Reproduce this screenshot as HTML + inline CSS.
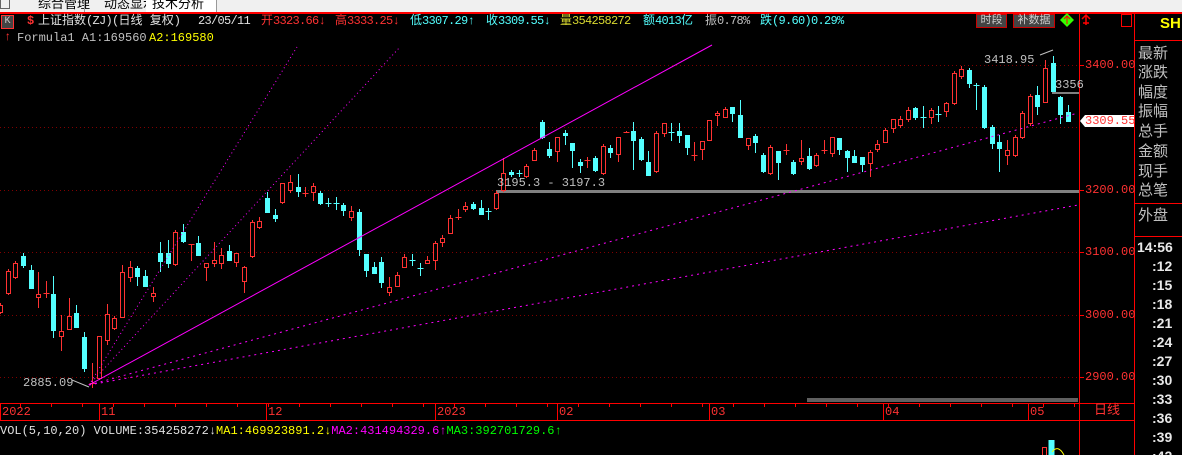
<!DOCTYPE html>
<html><head><meta charset="utf-8">
<style>
*{margin:0;padding:0}
html,body{width:1182px;height:455px;overflow:hidden}
body{background:#000;position:relative;font-family:"Liberation Mono","Noto Sans CJK SC",monospace;}
.t{position:absolute;white-space:nowrap;font-size:12px;line-height:14px}
.cj{font-family:"Liberation Mono","Noto Sans CJK SC",monospace}
.n{letter-spacing:-0.7px}
.r{color:#ff3232}.c{color:#54ffff}.y{color:#ffff00}.g{color:#c0c0c0}.w{color:#e0e0e0}.m{color:#ff00ff}.gr{color:#00ff00}
.pl{position:absolute;left:1138px;font-size:15px;line-height:17px;color:#c0c0c0;font-family:"Noto Sans CJK SC",sans-serif}
.tm{position:absolute;font-size:14px;line-height:16px;color:#e8e8e8;font-weight:bold;font-family:"Liberation Sans",sans-serif}
.tab{position:absolute;top:-7px;font-size:13px;color:#000;font-family:'Noto Sans CJK SC',sans-serif}
</style></head><body>
<div style="position:absolute;left:0;top:0;width:1182px;height:12px;background:#f0f0f0;overflow:hidden">
 <div style="position:absolute;left:0;top:0;width:8px;height:8px;border:1px solid #666;border-top:none"></div>
 <div class="tab" style="left:38px">综合管理</div>
 <div style="position:absolute;left:84px;top:0;width:1px;height:12px;background:#999"></div>
 <div class="tab" style="left:104px">动态显示牌</div>
 <div style="position:absolute;left:146px;top:0;width:70px;height:12px;background:#fff"></div>
 <div class="tab" style="left:152px">技术分析</div>
 <div style="position:absolute;left:216px;top:0;width:1px;height:12px;background:#999"></div>
</div>
<div style="position:absolute;left:0;top:12px;width:1182px;height:2px;background:#ff0000"></div>

<svg width="1182" height="455" style="position:absolute;left:0;top:0" id="sv">
 <g stroke="#800000" stroke-width="1" stroke-dasharray="1,3">
  <line x1="0" y1="65.5" x2="1078" y2="65.5"/><line x1="0" y1="127.5" x2="1078" y2="127.5"/>
  <line x1="0" y1="190.5" x2="1078" y2="190.5"/><line x1="0" y1="252.5" x2="1078" y2="252.5"/>
  <line x1="0" y1="315.5" x2="1078" y2="315.5"/><line x1="0" y1="377.5" x2="1078" y2="377.5"/>
 </g>
 <rect x="496" y="190" width="583" height="3" fill="#808080"/>
 <rect x="1052" y="92" width="27" height="2" fill="#808080"/>
 <rect x="807" y="398" width="271" height="4" fill="#606060"/>
 <g id="cd"></g>
 <g stroke="#ff00ff" fill="none">
  <line x1="89" y1="385" x2="712" y2="45" stroke-width="1"/>
  <line x1="89" y1="385" x2="297" y2="47" stroke-dasharray="1,3"/>
  <line x1="89" y1="385" x2="400" y2="47" stroke-dasharray="1,3"/>
  <line x1="89" y1="385" x2="1078" y2="113" stroke-dasharray="2,4"/>
  <line x1="89" y1="385" x2="1078" y2="205" stroke-dasharray="2,4"/>
 </g>
 <polyline points="72,380 89,387" stroke="#c0c0c0" fill="none"/>
 <polyline points="1040,55 1053,50" stroke="#c0c0c0" fill="none"/>
 <line x1="1079.5" y1="14" x2="1079.5" y2="455" stroke="#ff0000"/>
 <line x1="1134.5" y1="14" x2="1134.5" y2="455" stroke="#ff0000"/>
 <line x1="1134" y1="40.5" x2="1182" y2="40.5" stroke="#ff0000"/>
 <line x1="1134" y1="203.5" x2="1182" y2="203.5" stroke="#ff0000"/>
 <line x1="1134" y1="236.5" x2="1182" y2="236.5" stroke="#ff0000"/>
 <line x1="0" y1="403.5" x2="1134" y2="403.5" stroke="#ff0000"/>
 <line x1="0" y1="420.5" x2="1134" y2="420.5" stroke="#ff0000"/>
 <g stroke="#ff0000">
  <line x1="0.5" y1="404" x2="0.5" y2="420"/><line x1="99.5" y1="404" x2="99.5" y2="420"/>
  <line x1="266.5" y1="404" x2="266.5" y2="420"/><line x1="435.5" y1="404" x2="435.5" y2="420"/>
  <line x1="557.5" y1="404" x2="557.5" y2="420"/><line x1="709.5" y1="404" x2="709.5" y2="420"/>
  <line x1="883.5" y1="404" x2="883.5" y2="420"/><line x1="1028.5" y1="404" x2="1028.5" y2="420"/>
 </g>
 <g stroke="#ff0000" id="tk"></g>
 <g stroke="#ff0000">
  <line x1="1079" y1="65.5" x2="1084" y2="65.5"/><line x1="1079" y1="190.5" x2="1084" y2="190.5"/>
  <line x1="1079" y1="252.5" x2="1084" y2="252.5"/><line x1="1079" y1="315.5" x2="1084" y2="315.5"/>
  <line x1="1079" y1="377.5" x2="1084" y2="377.5"/>
 </g>
 <polygon points="1080,121 1085,115 1134,115 1134,127 1085,127" fill="#fff"/>
 <rect x="1048.5" y="440" width="6" height="15" fill="#54ffff"/>
 <rect x="1042.5" y="447.5" width="4" height="8" fill="none" stroke="#ff3232"/>
 <path d="M1052 452 Q1058 444 1064 455" stroke="#ffff00" fill="none"/>
 <polygon points="1067,13 1074,20 1067,27 1060,20" fill="#33ff00"/>
 <path d="M1067 16 L1067 24 M1064 19 L1067 16 L1070 19" stroke="#ff0000" fill="none"/>
 <path d="M1086 15 L1086 25 M1082 19 L1086 15 L1090 19 M1083 23 L1089 23" stroke="#ff0000" stroke-width="1.5" fill="none"/>
 <rect x="1121.5" y="14.5" width="10" height="12" fill="none" stroke="#ff0000"/>
</svg>

<div class="t" style="left:1px;top:15px;width:11px;height:12px;border:1px solid #ff3232;background:#444;color:#ccc;font-size:10px;line-height:12px;text-align:center">K</div>
<div class="t r" style="left:27px;top:14px;font-weight:bold">$</div>
<div class="t cj w" style="left:38px;top:14px">上证指数<span class="n">(ZJ)(</span>日线 复权<span class="n">)</span></div>
<div class="t w n" style="left:198px;top:14px">23/05/11</div>
<div class="t cj r" style="left:261px;top:14px">开<span class="n">3323.66</span>↓</div>
<div class="t cj r" style="left:335px;top:14px">高<span class="n">3333.25</span>↓</div>
<div class="t cj c" style="left:410px;top:14px">低<span class="n">3307.29</span>↑</div>
<div class="t cj c" style="left:486px;top:14px">收<span class="n">3309.55</span>↓</div>
<div class="t cj" style="left:560px;top:14px;color:#d8d830">量<span class="n">354258272</span></div>
<div class="t cj c" style="left:643px;top:14px">额<span class="n">4013</span>亿</div>
<div class="t cj g" style="left:705px;top:14px">振<span class="n">0.78%</span></div>
<div class="t cj c" style="left:760px;top:14px">跌<span class="n">(9.60)0.29%</span></div>
<div class="t cj" style="left:976px;top:14px;width:29px;height:12px;border:1px solid #c00;background:#444;color:#ccc;font-size:11px;line-height:12px;text-align:center">时段</div>
<div class="t cj" style="left:1013px;top:14px;width:40px;height:12px;border:1px solid #c00;background:#444;color:#ccc;font-size:11px;line-height:12px;text-align:center">补数据</div>
<div class="t y" style="left:1160px;top:17px;font-size:15px;font-weight:bold;font-family:'Liberation Sans'">SH</div>

<div class="t r" style="left:4px;top:30px;font-weight:bold">↑</div>
<div class="t g" style="left:17px;top:31px">Formula1 A1:169560</div>
<div class="t y" style="left:149px;top:31px">A2:169580</div>

<div class="t g" style="left:23px;top:376px">2885.09</div>
<div class="t g" style="left:984px;top:53px">3418.95</div>
<div class="t g" style="left:1055px;top:78px">3356</div>
<div class="t g" style="left:497px;top:176px">3195.3 - 3197.3</div>

<div class="t r" style="left:1085px;top:58px">3400.00</div>
<div class="t r" style="left:1085px;top:183px">3200.00</div>
<div class="t r" style="left:1085px;top:245px">3100.00</div>
<div class="t r" style="left:1085px;top:308px">3000.00</div>
<div class="t r" style="left:1085px;top:370px">2900.00</div>
<div class="t r" style="left:1085px;top:114px">3309.55</div>

<div class="t r" style="left:2px;top:405px">2022</div>
<div class="t r" style="left:101px;top:405px">11</div>
<div class="t r" style="left:268px;top:405px">12</div>
<div class="t r" style="left:437px;top:405px">2023</div>
<div class="t r" style="left:559px;top:405px">02</div>
<div class="t r" style="left:711px;top:405px">03</div>
<div class="t r" style="left:885px;top:405px">04</div>
<div class="t r" style="left:1030px;top:405px">05</div>
<div class="t r cj" style="left:1094px;top:404px;font-size:13px">日线</div>

<div class="t" style="left:0;top:424px"><span class="w">VOL(5,10,20) VOLUME:354258272↓</span><span class="y">MA1:469923891.2↓</span><span class="m">MA2:431494329.6↑</span><span class="gr">MA3:392701729.6↑</span></div>

<div class="pl" style="top:44px">最新</div><div class="pl" style="top:63px">涨跌</div>
<div class="pl" style="top:83px">幅度</div><div class="pl" style="top:102px">振幅</div>
<div class="pl" style="top:122px">总手</div><div class="pl" style="top:142px">金额</div>
<div class="pl" style="top:162px">现手</div><div class="pl" style="top:181px">总笔</div>
<div class="pl" style="top:206px">外盘</div>
<div class="tm" style="left:1137px;top:239px">14:56</div>
<div class="tm" style="left:1152px;top:258px">:12</div>
<div class="tm" style="left:1152px;top:277px">:15</div>
<div class="tm" style="left:1152px;top:296px">:18</div>
<div class="tm" style="left:1152px;top:315px">:21</div>
<div class="tm" style="left:1152px;top:334px">:24</div>
<div class="tm" style="left:1152px;top:353px">:27</div>
<div class="tm" style="left:1152px;top:372px">:30</div>
<div class="tm" style="left:1152px;top:391px">:33</div>
<div class="tm" style="left:1152px;top:410px">:36</div>
<div class="tm" style="left:1152px;top:429px">:39</div>
<div class="tm" style="left:1152px;top:448px;height:7px;overflow:hidden">:42</div>

<script>
var D="r,305,312;r,271,293;r,263,277;c,256,265,253,268;c,270,288,265,288;r,294,297,272,308;r,293,293,281,298;c,294,330,276,338;r,331,336,315,351;r,316,329,298,329;c,313,327,305,327;c,337,368,332,372;r,383,383,363,388;r,336,378,336,380;r,314,340,304,345;r,318,328;r,272,317,265,317;r,267,277,261,282;c,268,276,266,286;c,276,286,270,286;r,293,296,287,302;c,253,261,242,272;c,253,263,240,268;r,232,264;c,232,241,224,243;r,244,244,244,261;c,243,255,236,255;r,263,267,263,281;r,260,263,242,267;r,255,263,248,269;c,251,260,245,260;r,253,262,253,267;r,267,281,266,293;r,222,256;r,221,227,217,229;c,198,212,192,212;c,215,218,209,222;r,183,202,183,204;r,182,190,175,193;c,187,191,174,197;r,193,193,187,197;r,186,192,183,201;c,193,203;c,203,203,198,207;c,203,203,197,210;c,205,210,203,216;r,211,217,206,221;c,212,249,209,256;c,254,270,254,277;c,267,273,262,273;c,262,282,257,288;r,287,292,277,296;r,275,286,272,286;r,257,267,254,268;c,260,260,254,266;c,268,268,263,276;r,260,263,256,263;r,243,260,241,270;r,238,242,235,247;r,218,233,215,233;r,217,217,209,220;r,206,209,202,212;c,204,208;c,208,214,200,215;c,211,211,208,220;r,193,208;r,173,190,158,192;c,172,174,170,177;c,173,174,170,177;r,166,176;r,150,160,148,160;c,122,137;c,149,155,142,158;r,137,151,137,162;c,133,135,130,145;c,143,150,143,168;c,162,165,159,173;r,160,160,157,168;c,158,170;r,146,173;c,148,152,145,158;r,137,154,137,162;r,132,133,131,133;c,131,140,122,170;c,139,159;c,162,175,151,175;r,133,171;r,123,133,123,137;c,132,132,123,141;c,131,135,123,143;c,135,147,135,155;r,155,155,142,161;r,141,149,141,160;r,120,140,120,140;r,113,115,111,126;r,109,117,107,118;c,107,113,107,122;c,115,137,100,137;r,138,145,138,150;c,136,142,134,153;c,155,171;r,147,173;c,151,162,151,180;r,150,150,144,155;c,162,173;r,158,161,140,165;c,156,168,148,170;r,155,165;r,150,150,140,154;r,137,153,137,157;c,138,149,138,155;c,151,157,150,172;c,156,162,150,163;c,157,164,157,172;r,152,163,150,177;r,144,149,140,152;r,130,142,128,142;r,119,128,119,133;r,119,125,116,128;r,110,119,107,122;c,108,117,107,120;c,117,117,106,128;r,110,117,108,124;c,114,114,106,122;r,103,111,102,117;r,73,103;r,69,76,66,79;c,70,83,68,88;c,85,85,83,110;c,87,127;c,127,143,125,149;c,142,148,135,172;r,150,155,140,165;r,137,155;r,113,137;r,96,123,94,126;c,95,106,86,115;r,68,102,60,102;c,63,91,56,91;c,97,114,96,124;c,112,121,105,121";
var a=D.split(";"),n=a.length,sp=1068/(n-1),h="";
for(var i=0;i<n;i++){var p=a[i].split(","),col=p[0]=="r"?"#ff3232":"#54ffff",t=+p[1],b=+p[2],wt=p.length>3?+p[3]:t-2,wb=p.length>3?+p[4]:b+2;
var x=Math.round(i*sp)+0.5;
h+='<line x1="'+x+'" y1="'+wt+'" x2="'+x+'" y2="'+wb+'" stroke="'+col+'"/>';
if(b-t<1.5){h+='<line x1="'+(x-3)+'" y1="'+t+'.5" x2="'+(x+3)+'" y2="'+t+'.5" stroke="'+col+'"/>';}
else if(p[0]=="r"){h+='<rect x="'+(x-2)+'" y="'+(t+0.5)+'" width="4" height="'+(b-t)+'" fill="#000" stroke="'+col+'"/>';}
else{h+='<rect x="'+(x-2.5)+'" y="'+t+'" width="5" height="'+(b-t+1)+'" fill="'+col+'"/>';}}
document.getElementById("cd").innerHTML=h;
var tk="";for(var x=20;x<1078;x+=31){tk+='<line x1="'+x+'.5" y1="404" x2="'+x+'.5" y2="407"/>';}
document.getElementById("tk").innerHTML=tk;
</script>
</body></html>
